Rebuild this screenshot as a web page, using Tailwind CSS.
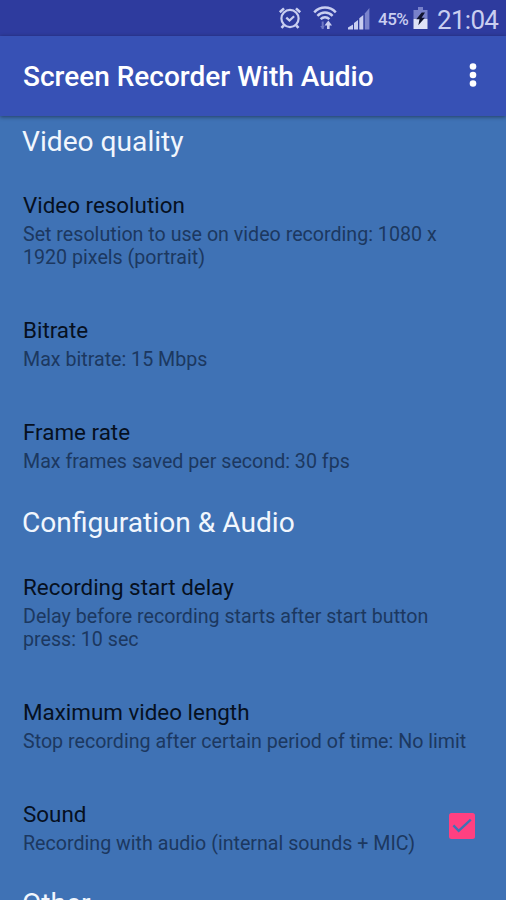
<!DOCTYPE html>
<html lang="en">
<head>
  <meta charset="UTF-8">
  <meta name="viewport" content="width=device-width, initial-scale=1.0">
  <title>Screen Recorder With Audio</title>
  <script src="https://cdn.jsdelivr.net/npm/@tailwindcss/browser@4"></script>
</head>
<body class="bg-[#3f72b5] font-[Roboto,sans-serif]">
  <div class="w-[506px] h-[900px] overflow-hidden flex flex-col">

    <!-- Status bar -->
    <div class="h-9 shrink-0 bg-[#2e3b9e] flex items-center justify-end pr-[7px] text-[#c9cef0]">
      <svg class="w-6 h-6 mr-[11px]" viewBox="0 0 24 24" fill="none" stroke="currentColor" stroke-width="2.2">
        <circle cx="12" cy="12.5" r="8.6"/>
        <path d="M1.8 6.2 6 2.4M22.2 6.2 18 2.4M5.8 19.3l-2.3 2.6M18.2 19.3l2.3 2.6" stroke-width="2.6"/>
        <path d="m8.3 11.6 3.2 3 4.6-4.4"/>
      </svg>
      <svg class="w-6 h-6 mr-2.5" viewBox="0 0 24 24" fill="none" stroke="currentColor" stroke-width="2.5">
        <path d="M1.2 6.3C7.3 0 16.7 0 22.8 6.3M4.4 9.8c4.4-4.3 10.8-4.3 15.2 0M7.6 13.1c2.6-2.4 6.2-2.4 8.8 0"/>
        <path d="M9.7 15.5v7.5" stroke="#6f79c4" stroke-width="2"/>
        <path d="m7.2 20 2.5 3.2 2-3.2Z" fill="#6f79c4" stroke="none"/>
        <path d="M15.3 23v-5" stroke-width="2.6"/>
        <path d="m11.5 19.4 3.8-4.9 3.8 4.9Z" fill="currentColor" stroke="none"/>
      </svg>
      <svg class="w-6 h-6 mr-[7px]" viewBox="0 0 24 24" fill="currentColor">
        <path d="M1 21.5 6 18.5v5H1ZM7 17l4-3v9.5H7ZM12.3 12.2l4-3.2v14.5h-4Z"/>
        <path d="M17.8 7.5 22.4 2v21.5h-4.6Z" fill="#7b84cc"/>
      </svg>
      <span class="text-[17px] font-medium leading-9 w-[31px] mr-1 whitespace-nowrap tracking-[-0.5px] pt-0.5">45%</span>
      <svg class="w-[15px] h-[22px] mr-[9px]" viewBox="0 0 15 22">
        <path d="M5 0h5v3h4.5v9H.5V3H5Z" fill="#7881ca"/>
        <path d="M.5 12h14v10H.5Z" fill="#dfe2f6"/>
        <path d="m8.7 5.5-5.4 6.8h3.2l-1.2 6 6.6-7.6H8.6l3.4-5.2Z" fill="#10142f"/>
      </svg>
      <span class="text-[26px] leading-9 w-[62px] whitespace-nowrap tracking-[-0.7px] pt-[3px]">21:04</span>
    </div>

    <!-- App bar -->
    <div class="relative h-20 shrink-0 bg-[#3751b5] shadow-[0_1px_4px_rgba(0,0,0,0.45)] flex items-center justify-between pl-[23px] pr-[29px]">
      <h1 class="pt-0.5 text-[28px] font-medium text-white whitespace-nowrap">Screen Recorder With Audio</h1>
      <svg class="w-2 h-6 mb-0.5" viewBox="0 0 8 24" fill="#fff">
        <circle cx="4" cy="3.5" r="3.3"/>
        <circle cx="4" cy="12" r="3.3"/>
        <circle cx="4" cy="20.5" r="3.3"/>
      </svg>
    </div>

    <!-- Settings list -->
    <h2 class="h-[51px] shrink-0 flex items-center pl-[22px] pt-0.5 text-[28.15px] text-[#f1f6fd]">Video quality</h2>

    <div class="h-[125px] shrink-0 px-[23px] pt-6">
      <h3 class="text-[22.4px] leading-7 text-[#06101f]">Video resolution</h3>
      <p class="mt-1 text-[19.65px] leading-[23px] text-[#1c3860]">Set resolution to use on video recording: 1080 x<br>1920 pixels (portrait)</p>
    </div>

    <div class="h-[102px] shrink-0 px-[23px] pt-6">
      <h3 class="text-[22.4px] leading-7 text-[#06101f]">Bitrate</h3>
      <p class="mt-1 text-[19.65px] leading-[23px] text-[#1c3860]">Max bitrate: 15 Mbps</p>
    </div>

    <div class="h-[102px] shrink-0 px-[23px] pt-6">
      <h3 class="text-[22.4px] leading-7 text-[#06101f]">Frame rate</h3>
      <p class="mt-1 text-[19.65px] leading-[23px] text-[#1c3860]">Max frames saved per second: 30 fps</p>
    </div>

    <h2 class="h-[53px] shrink-0 flex items-center pl-[22px] pt-0.5 text-[28.15px] text-[#f1f6fd]">Configuration &amp; Audio</h2>

    <div class="h-[125px] shrink-0 px-[23px] pt-6">
      <h3 class="text-[22.4px] leading-7 text-[#06101f]">Recording start delay</h3>
      <p class="mt-1 text-[19.65px] leading-[23px] text-[#1c3860]">Delay before recording starts after start button<br>press: 10 sec</p>
    </div>

    <div class="h-[102px] shrink-0 px-[23px] pt-6">
      <h3 class="text-[22.4px] leading-7 text-[#06101f]">Maximum video length</h3>
      <p class="mt-1 text-[19.65px] leading-[23px] text-[#1c3860] whitespace-nowrap">Stop recording after certain period of time: No limit</p>
    </div>

    <div class="h-[102px] shrink-0 pl-[23px] pr-[31px] pt-6 flex items-start justify-between">
      <div>
        <h3 class="text-[22.4px] leading-7 text-[#06101f]">Sound</h3>
        <p class="mt-1 text-[19.65px] leading-[23px] text-[#1c3860] whitespace-nowrap">Recording with audio (internal sounds + MIC)</p>
      </div>
      <svg class="w-[26px] h-[26px] mt-[13px]" viewBox="0 0 26 26">
        <rect width="26" height="26" rx="2.5" fill="#ff4081"/>
        <path d="m4.4 12.4 5.3 5.4L21.8 6.6" fill="none" stroke="#3f72b5" stroke-width="2.4"/>
      </svg>
    </div>

    <h2 class="h-[53px] shrink-0 flex items-center pl-[22px] text-[28.15px] text-[#f1f6fd]">Other</h2>
  </div>
</body>
</html>
